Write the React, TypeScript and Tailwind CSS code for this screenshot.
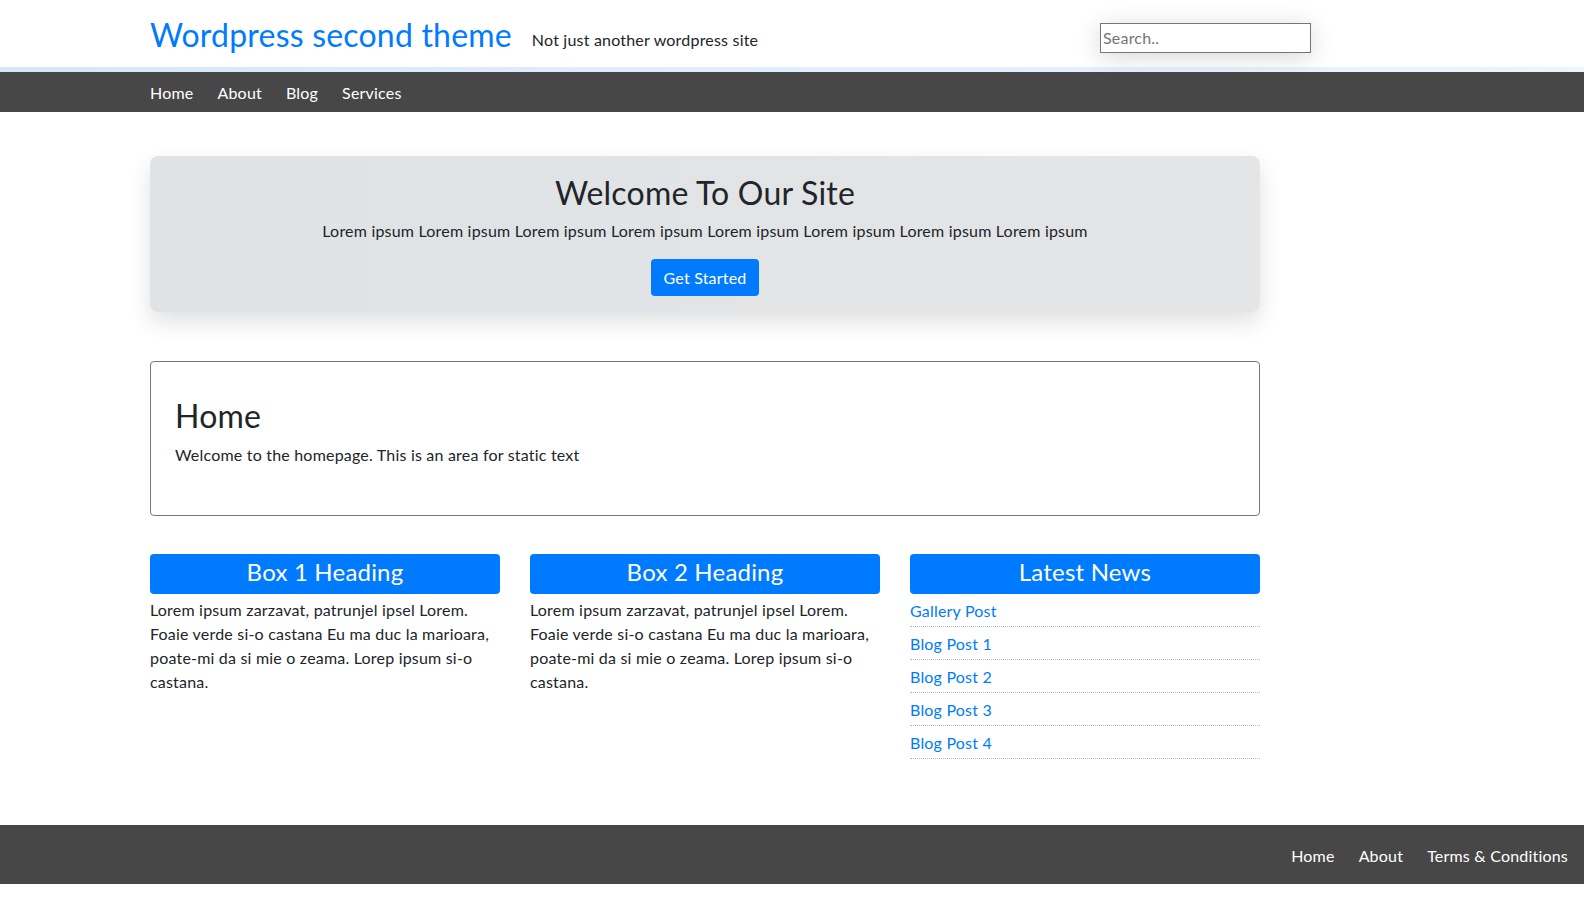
const newsLinks = ['Gallery Post', 'Blog Post 1', 'Blog Post 2', 'Blog Post 3', 'Blog Post 4'];

const boxText =
  'Lorem ipsum zarzavat, patrunjel ipsel Lorem. Foaie verde si-o castana Eu ma duc la marioara, poate-mi da si mie o zeama. Lorep ipsum si-o castana.';

export default function App() {
  return (
    <div className="min-h-[902px] bg-white text-[#212529] font-['Lato','Open_Sans',sans-serif] text-base leading-6 tracking-[0.2px]">
      <header className="h-[67px] relative">
        <div className="flex items-start pl-[150px]">
          <h1 className="text-[32px] leading-[38px] mt-[16px] text-[#007bff] font-normal">Wordpress second theme</h1>
          <p className="ml-[20px] mt-[28px] text-base">Not just another wordpress site</p>
          <input
            type="text"
            placeholder="Search.."
            className="ml-auto mr-[273px] mt-[23px] w-[211px] h-[30px] border border-[#767676] px-[2px] pb-[2px] text-base placeholder:text-[#757575] outline-none shadow-[0_4px_24px_rgba(0,0,0,0.16)] relative z-10"
          />
        </div>
      </header>
      <div className="h-[5px] bg-gradient-to-r from-[#d6e7fb] to-[#ecf4fd]" />
      <nav className="h-[40px] bg-[#474747] flex items-center pl-[150px] pt-[2px] gap-6 text-white">
        <a href="#">Home</a>
        <a href="#">About</a>
        <a href="#">Blog</a>
        <a href="#">Services</a>
      </nav>

      <main className="pl-[150px] w-[1260px] pt-[44px] pb-[66px]">
        <section className="rounded-lg bg-gradient-to-r from-[#dfe3e6] to-[#e4e5e6] shadow-[0_10px_22px_rgba(0,0,0,0.12)] h-[156px] flex flex-col items-center pt-[18px]">
          <h2 className="text-[32px] leading-[38px]">Welcome To Our Site</h2>
          <p className="mt-[7px]">
            Lorem ipsum Lorem ipsum Lorem ipsum Lorem ipsum Lorem ipsum Lorem ipsum Lorem ipsum Lorem ipsum
          </p>
          <button className="mt-[16px] h-[37px] px-[13px] rounded bg-[#007bff] text-white">Get Started</button>
        </section>

        <section className="mt-[49px] border border-[#777] rounded px-6 pt-[35px] pb-[32px]">
          <h2 className="text-[32px] leading-[38px]">Home</h2>
          <p className="mt-[8px] mb-4">Welcome to the homepage. This is an area for static text</p>
        </section>

        <div className="mt-[38px] grid grid-cols-3 gap-[30px]">
          {['Box 1 Heading', 'Box 2 Heading'].map((h) => (
            <div key={h}>
              <h3 className="h-[40px] rounded bg-[#007bff] text-white text-2xl leading-[35px] text-center">{h}</h3>
              <p className="mt-[4px]">{boxText}</p>
            </div>
          ))}
          <div>
            <h3 className="h-[40px] rounded bg-[#007bff] text-white text-2xl leading-[35px] text-center">Latest News</h3>
            <ul>
              {newsLinks.map((l) => (
                <li key={l} className="pt-[5px] pb-[3px] border-b border-dotted border-[#a9bed3]">
                  <a href="#" className="text-[#007bff]">
                    {l}
                  </a>
                </li>
              ))}
            </ul>
          </div>
        </div>
      </main>

      <footer className="h-[59px] bg-[#474747] flex items-center justify-end pr-4 pt-[3px] gap-6 text-white">
        <a href="#">Home</a>
        <a href="#">About</a>
        <a href="#">Terms &amp; Conditions</a>
      </footer>
    </div>
  );
}
